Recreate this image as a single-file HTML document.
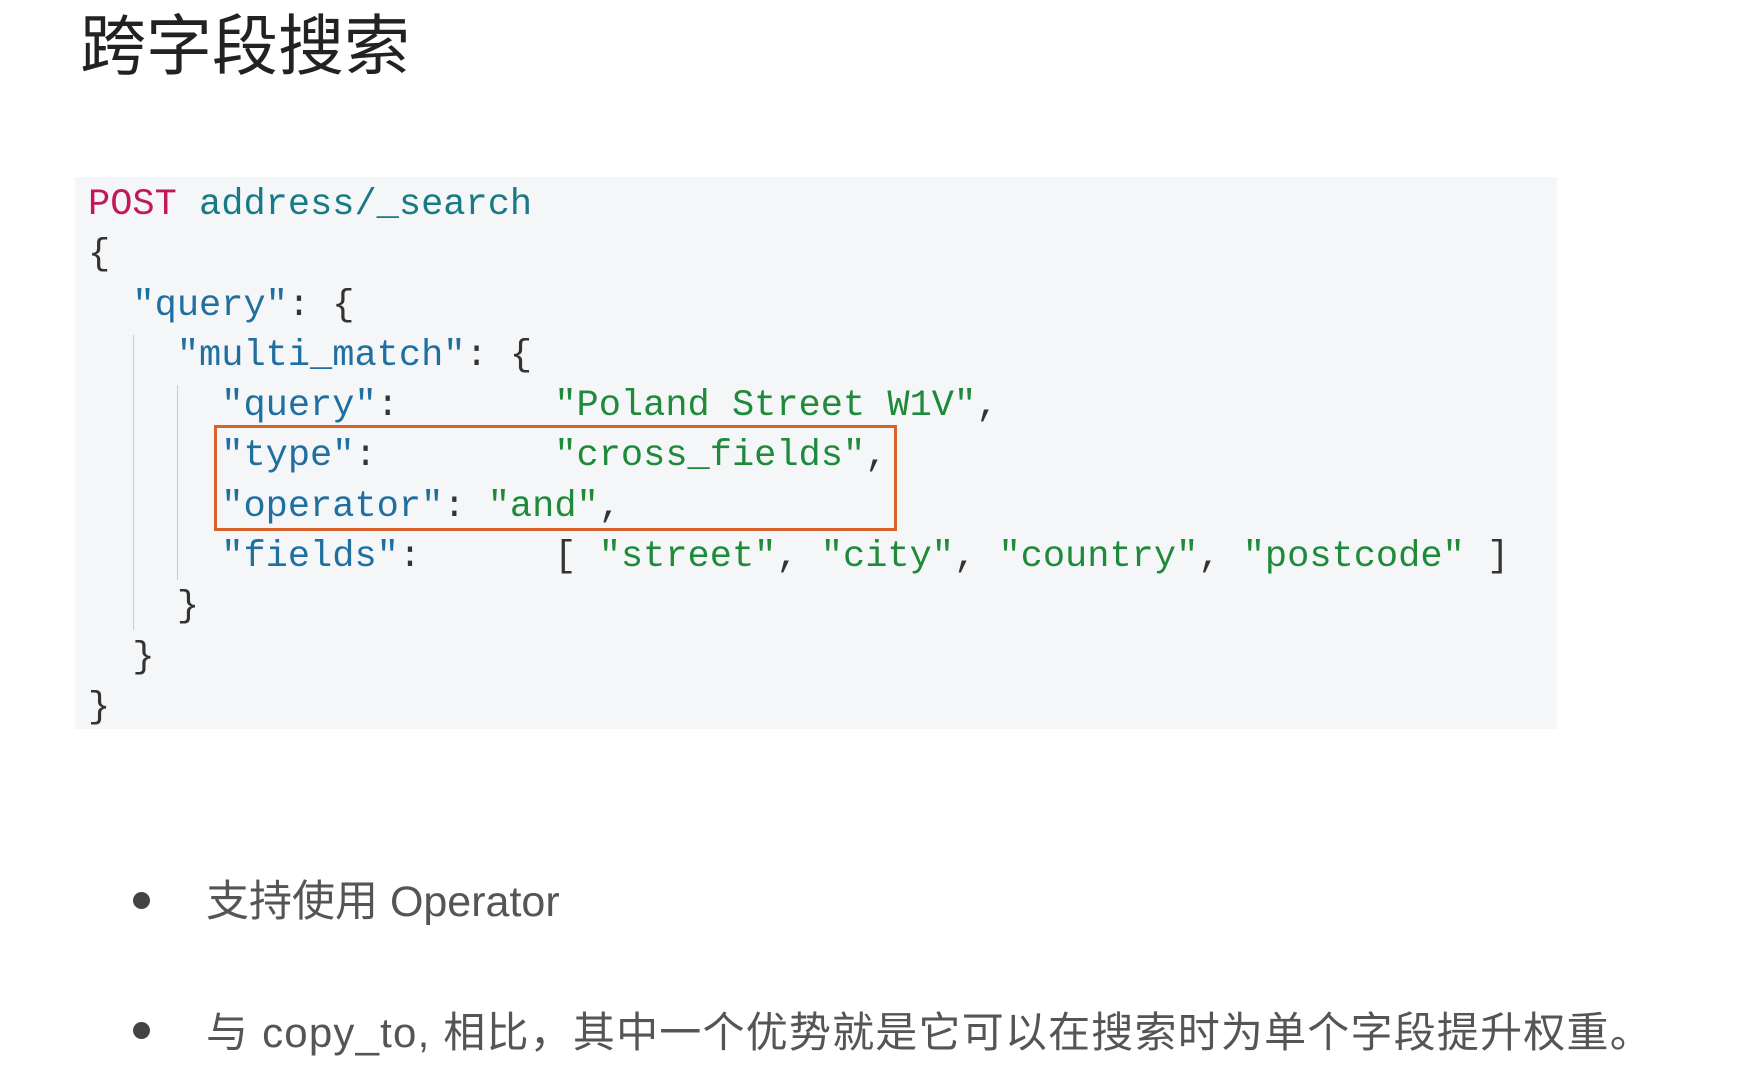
<!DOCTYPE html>
<html><head><meta charset="utf-8"><style>
body{margin:0;width:1764px;height:1080px;background:#fff;position:relative;overflow:hidden;}
.title{position:absolute;left:80px;top:-7px;font:66px "Liberation Sans","Noto Sans CJK SC",sans-serif;color:#222;}
.code{position:absolute;left:75px;top:177px;width:1482px;height:552px;background:#f5f6f8;}
pre{position:absolute;left:88px;top:180px;margin:0;font:37px/50.3px "Liberation Mono",monospace;color:#333;letter-spacing:0;}
.m{color:#c2185b}.u{color:#177a86}.k{color:#1f6fa0}.s{color:#1e8a3a}
.g{position:absolute;width:1px;background:#ccc;}
.box{position:absolute;left:214px;top:425px;width:677px;height:100px;border:3px solid #d9622b;}
.b{position:absolute;left:206px;font:43px "Liberation Sans","Noto Sans CJK SC",sans-serif;color:#555;}
.d{position:absolute;left:133px;width:17px;height:17px;border-radius:50%;background:#444;}
</style></head><body>
<div class="title">跨字段搜索</div>
<div class="code"></div>
<div class="g" style="left:133px;top:335px;height:295px"></div>
<div class="g" style="left:177px;top:385px;height:195px"></div>
<pre><span class="m">POST</span> <span class="u">address/_search</span>
{
  <span class="k">"query"</span>: {
    <span class="k">"multi_match"</span>: {
      <span class="k">"query"</span>:       <span class="s">"Poland Street W1V"</span>,
      <span class="k">"type"</span>:        <span class="s">"cross_fields"</span>,
      <span class="k">"operator"</span>: <span class="s">"and"</span>,
      <span class="k">"fields"</span>:      [ <span class="s">"street"</span>, <span class="s">"city"</span>, <span class="s">"country"</span>, <span class="s">"postcode"</span> ]
    }
  }
}</pre>
<div class="box"></div>
<div class="d" style="top:892px"></div>
<div class="b" style="top:867px">支持使用 Operator</div>
<div class="d" style="top:1022px"></div>
<div class="b" style="top:999px;font-size:42px;letter-spacing:1.2px">与 copy_to, 相比，其中一个优势就是它可以在搜索时为单个字段提升权重。</div>
</body></html>
